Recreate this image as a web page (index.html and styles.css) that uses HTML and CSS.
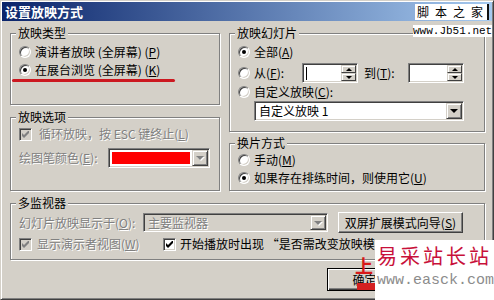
FILE: index.html
```html
<!DOCTYPE html>
<html lang="zh-CN">
<head>
  <meta charset="UTF-8">
  <title>设置放映方式</title>
  <link rel="stylesheet" href="styles.css">
</head>
<body>
  <div class="dialog">
    <div class="titlebar">设置放映方式</div>

    <div class="content">
      <div class="col left">
        <fieldset class="group type">
          <legend>放映类型</legend>
          <div class="row"><i class="radio"></i><span>演讲者放映 (全屏幕) (<u>P</u>)</span></div>
          <div class="row"><i class="radio on"></i><span>在展台浏览 (全屏幕) (<u>K</u>)</span></div>
          <div class="mark"></div>
        </fieldset>

        <fieldset class="group options">
          <legend>放映选项</legend>
          <div class="row off loop">
            <i class="check dim"><svg viewBox="0 0 7 7" width="7" height="7"><polygon points="0,2 2,4 7,-1 7,2 2,7 0,5"/></svg></i>
            <span>循环放映，按 ESC 键终止(<u>L</u>)</span>
          </div>
          <div class="row pen">
            <span class="off">绘图笔颜色(<u>E</u>):</span>
            <span class="field colorpick">
              <span class="swatch"></span>
              <span class="dropbtn"><b class="arrow dim"></b></span>
            </span>
          </div>
        </fieldset>
      </div>

      <div class="col right">
        <fieldset class="group slides">
          <legend>放映幻灯片</legend>
          <div class="row all"><i class="radio on"></i><span>全部(<u>A</u>)</span></div>
          <div class="row range">
            <i class="radio"></i>
            <span class="lbl-from">从(<u>F</u>):</span>
            <span class="field spin">
              <span class="text"><span class="caret"></span></span>
              <span class="spinbtns"><b class="sb"><b class="up"></b></b><b class="sb"><b class="down"></b></b></span>
            </span>
            <span class="lbl-to">到(<u>T</u>):</span>
            <span class="field spin">
              <span class="text"></span>
              <span class="spinbtns"><b class="sb"><b class="up"></b></b><b class="sb"><b class="down"></b></b></span>
            </span>
          </div>
          <div class="row custom-row"><i class="radio"></i><span>自定义放映(<u>C</u>):</span></div>
          <div class="field combo custom">
            <span class="value">自定义放映 1</span>
            <span class="dropbtn"><b class="arrow"></b></span>
          </div>
        </fieldset>

        <fieldset class="group advance">
          <legend>换片方式</legend>
          <div class="row"><i class="radio"></i><span>手动(<u>M</u>)</span></div>
          <div class="row"><i class="radio on"></i><span>如果存在排练时间，则使用它(<u>U</u>)</span></div>
        </fieldset>
      </div>

      <fieldset class="group monitors">
        <legend>多监视器</legend>
        <div class="row display">
          <span class="off lbl-show">幻灯片放映显示于(<u>O</u>):</span>
          <span class="field combo monitor">
            <span class="value off">主要监视器</span>
            <span class="dropbtn"><b class="arrow dim"></b></span>
          </span>
          <button class="btn wizard">双屏扩展模式向导(<u>S</u>)</button>
        </div>
        <div class="row checks">
          <span class="off presenter">
            <i class="check dim"><svg viewBox="0 0 7 7" width="7" height="7"><polygon points="0,2 2,4 7,-1 7,2 2,7 0,5"/></svg></i>
            <span>显示演示者视图(<u>W</u>)</span>
          </span>
          <i class="check"><svg viewBox="0 0 7 7" width="7" height="7"><polygon points="0,2 2,4 7,-1 7,2 2,7 0,5"/></svg></i>
          <span class="prompt">开始播放时出现 “是否需改变放映模式” 提示(<u>A</u>)</span>
        </div>
      </fieldset>
    </div>

    <div class="buttons">
      <button class="btn default">确定</button>
      <button class="btn">取消</button>
    </div>
  </div>

  <div class="brand">脚本之家</div>
  <div class="url">www.Jb51.net</div>
  <div class="stamp-red">上</div>
  <div class="stamp-bar"></div>
  <div class="stamp">
    <div class="name">易采站长站</div>
    <div class="site">www.easck.com</div>
  </div>
</body>
</html>
```

FILE: styles.css
```css
* {
  box-sizing: border-box;
}
body {
  margin: 0;
  position: relative;
  width: 494px;
  height: 300px;
  overflow: hidden;
  background: #d4d0c8;
  color: #000;
  font: 12px/16px "Noto Sans CJK SC", "Liberation Sans", sans-serif;
}
.dialog {
  width: 494px;
  height: 300px;
  padding: 1px;
  border: 1px solid;
  border-color: #d4d0c8 #404040 #404040 #d4d0c8;
  box-shadow: inset 1px 1px #fff, inset -1px -1px #808080;
}
.titlebar {
  height: 19px;
  padding-left: 3px;
  background: linear-gradient(to right, #0a246a, #a6caf0);
  color: #fff;
  font-weight: bold;
  font-size: 13px;
  line-height: 19px;
}
.content {
  display: grid;
  grid-template-columns: 210px 256px;
  column-gap: 9px;
  padding: 6px 0 0 8px;
}
.col {
  display: flex;
  flex-direction: column;
}
.group {
  margin: 0;
  padding: 0 9px 0 8px;
  min-width: 0;
  border: 1px solid #808080;
  box-shadow: inset 1px 1px #fff, 1px 1px #fff;
}
.group legend {
  margin-left: -3px;
  padding: 0 2px;
  line-height: 12px;
  background: #d4d0c8;
}
.row {
  display: flex;
  align-items: center;
  gap: 4px;
  height: 18px;
  white-space: nowrap;
}
.off {
  color: #808080;
  text-shadow: 1px 1px #fff;
}

/* radios and checks */
.radio {
  position: relative;
  flex: none;
  width: 12px;
  height: 12px;
  border-radius: 50%;
  border: 1px solid;
  border-color: #808080 #fff #fff #808080;
  background: #fff;
  box-shadow: inset 1px 1px #404040, inset -1px -1px #d4d0c8;
}
.radio.on::after {
  content: "";
  position: absolute;
  left: 3px;
  top: 3px;
  width: 4px;
  height: 4px;
  border-radius: 50%;
  background: #000;
}
.check {
  display: flex;
  align-items: center;
  justify-content: center;
  flex: none;
  width: 13px;
  height: 13px;
  border: 1px solid;
  border-color: #808080 #fff #fff #808080;
  background: #fff;
  box-shadow: inset 1px 1px #404040, inset -1px -1px #d4d0c8;
}
.check svg {
  fill: #000;
}
.check.dim {
  background: #d4d0c8;
}
.check.dim svg {
  fill: #808080;
}

/* sunken fields */
.field {
  display: flex;
  padding: 1px;
  border: 1px solid;
  border-color: #808080 #fff #fff #808080;
  background: #fff;
  box-shadow: inset 1px 1px #404040, inset -1px -1px #d4d0c8;
}
.dropbtn {
  display: flex;
  align-items: center;
  justify-content: center;
  flex: none;
  width: 16px;
  height: 16px;
  background: #d4d0c8;
  border: 1px solid;
  border-color: #d4d0c8 #404040 #404040 #d4d0c8;
  box-shadow: inset 1px 1px #fff, inset -1px -1px #808080;
}
.arrow {
  width: 0;
  height: 0;
  border-left: 4px solid transparent;
  border-right: 4px solid transparent;
  border-top: 4px solid #000;
}
.arrow.dim {
  border-top-color: #808080;
  filter: drop-shadow(1px 1px 0 #fff);
}

/* buttons */
.btn {
  width: 75px;
  height: 23px;
  padding: 0;
  font: inherit;
  color: #000;
  background: #d4d0c8;
  border: 1px solid;
  border-color: #fff #404040 #404040 #fff;
  box-shadow: inset -1px -1px #808080;
  white-space: nowrap;
}
.btn.default {
  border: 1px solid #000;
  box-shadow: inset 1px 1px #fff, inset -1px -1px #404040, inset -2px -2px #808080;
}
.buttons {
  display: flex;
  justify-content: flex-end;
  gap: 6px;
  padding: 8px 9px 0 0;
}

/* 放映类型 */
.type {
  height: 78px;
  padding-top: 4px;
}
.mark {
  width: 163px;
  height: 3px;
  margin-left: -7px;
  border-radius: 2px;
  background: #cc1820;
}

/* 放映选项 */
.options {
  height: 80px;
  margin-top: 6px;
  padding-top: 3px;
}
.loop {
  height: 16px;
  gap: 7px;
}
.pen {
  justify-content: space-between;
  height: 20px;
  margin-top: 6px;
}
.colorpick {
  width: 102px;
  height: 20px;
}
.swatch {
  flex: 1;
  margin: 2px;
  background: #f00;
}

/* 放映幻灯片 */
.slides {
  height: 105px;
  padding-top: 5px;
}
.all {
  height: 16px;
}
.range {
  gap: 0;
  height: 20px;
  margin-top: 3px;
}
.range .radio {
  margin-right: 4px;
}
.lbl-from {
  width: 48px;
}
.lbl-to {
  width: 44px;
  margin-left: 6px;
}
.spin {
  width: 56px;
  height: 20px;
}
.spin .text {
  flex: 1;
  display: flex;
  align-items: center;
  padding-left: 2px;
}
.caret {
  width: 1px;
  height: 13px;
  background: #000;
}
.spinbtns {
  display: flex;
  flex-direction: column;
  width: 15px;
}
.sb {
  display: flex;
  align-items: center;
  justify-content: center;
  height: 8px;
  background: #d4d0c8;
  border: 1px solid;
  border-color: #d4d0c8 #404040 #404040 #d4d0c8;
  box-shadow: inset 1px 1px #fff;
}
.up, .down {
  width: 0;
  height: 0;
  border-left: 3px solid transparent;
  border-right: 3px solid transparent;
}
.up {
  border-bottom: 3px solid #000;
}
.down {
  border-top: 3px solid #000;
}
.custom-row {
  height: 16px;
  margin-top: 1px;
}
.custom {
  width: 210px;
  height: 20px;
  margin: 1px 0 0 16px;
}
.combo .value {
  flex: 1;
  padding-left: 3px;
  line-height: 16px;
}

/* 换片方式 */
.advance {
  height: 54px;
  margin-top: 5px;
  padding-top: 2px;
}

/* 多监视器 */
.monitors {
  grid-column: 1 / -1;
  height: 63px;
  margin-top: 6px;
  padding-top: 3px;
}
.display {
  gap: 0;
  height: 21px;
}
.lbl-show {
  width: 124px;
}
.monitor {
  width: 185px;
  height: 19px;
  background: #d4d0c8;
}
.monitor .dropbtn {
  height: 15px;
}
.btn.wizard {
  width: 125px;
  height: 21px;
  margin-left: 10px;
}
.checks {
  height: 16px;
  margin-top: 3px;
}
.presenter {
  display: flex;
  align-items: center;
  gap: 5px;
  width: 140px;
}
.prompt {
  max-width: 195px;
  overflow: hidden;
}

/* watermarks */
.brand {
  position: absolute;
  left: 415px;
  top: 4px;
  width: 74px;
  height: 16px;
  padding-left: 2px;
  background: #fff;
  border-right: 2px solid #111;
  letter-spacing: 6px;
  line-height: 16px;
  white-space: nowrap;
}
.url {
  position: absolute;
  left: 413px;
  top: 25px;
  width: 79px;
  height: 12px;
  background: #fff;
  font: 11px/12px "Liberation Mono", monospace;
}
.stamp-red {
  position: absolute;
  left: 355px;
  top: 255px;
  color: #d81818;
  font-weight: bold;
  font-size: 18px;
  line-height: 20px;
}
.stamp-bar {
  position: absolute;
  left: 357px;
  top: 283px;
  width: 18px;
  height: 7px;
  background: #d42020;
}
.stamp {
  position: absolute;
  left: 375px;
  top: 240px;
  width: 119px;
  height: 60px;
  background: #fff;
}
.stamp .name {
  padding: 4px 0 0 2px;
  color: #c8103a;
  font-size: 20px;
  line-height: 24px;
  letter-spacing: 3px;
  white-space: nowrap;
}
.stamp .site {
  margin-top: 5px;
  padding-left: 2px;
  color: #8c8c8c;
  font: 15px/16px "Liberation Mono", monospace;
}
```
